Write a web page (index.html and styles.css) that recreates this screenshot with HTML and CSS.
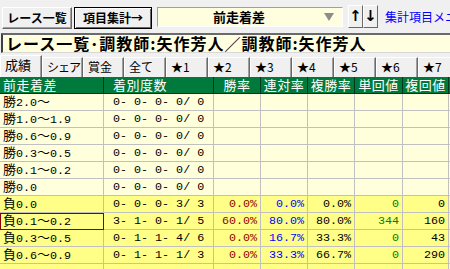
FILE: index.html
```html
<!DOCTYPE html>
<html lang="ja">
<head>
<meta charset="utf-8">
<link rel="stylesheet" href="styles.css">
</head>
<body>
<div class="app">
  <div class="toolbar">
    <div class="btn btn-list">レース一覧</div>
    <div class="btn btn-agg">項目集計→</div>
    <div class="combo"><span class="combo-text">前走着差</span><span class="tri"></span></div>
    <div class="arrow arrow-up">↑</div>
    <div class="arrow">↓</div>
    <div class="link">集計項目メニュー</div>
  </div>
  <div class="title">レース一覧･調教師:矢作芳人／調教師:矢作芳人</div>
  <div class="tabs">
    <div class="tab tab-sel w42">成績</div>
    <div class="tab w41 narrow">シェア</div>
    <div class="tab w41">賞金</div>
    <div class="tab w42">全て</div>
    <div class="tab w42">★1</div>
    <div class="tab w42">★2</div>
    <div class="tab w42">★3</div>
    <div class="tab w42">★4</div>
    <div class="tab w42">★5</div>
    <div class="tab w42">★6</div>
    <div class="tab w42">★7</div>
  </div>
  <div class="grid">
    <div class="hd">前走着差</div><div class="hd hd2">着別度数</div><div class="hd c">勝率</div><div class="hd c">連対率</div><div class="hd c">複勝率</div><div class="hd c">単回値</div><div class="hd c">複回値</div><div class="hd"></div>

    <div class="cl k"><span class="j">勝</span>2.0<span class="j">〜</span></div><div class="cl n">0- 0- 0- 0/ 0</div><div class="cl"></div><div class="cl"></div><div class="cl"></div><div class="cl"></div><div class="cl"></div><div class="cl"></div>
    <div class="cl k"><span class="j">勝</span>1.0<span class="j">〜</span>1.9</div><div class="cl n">0- 0- 0- 0/ 0</div><div class="cl"></div><div class="cl"></div><div class="cl"></div><div class="cl"></div><div class="cl"></div><div class="cl"></div>
    <div class="cl k"><span class="j">勝</span>0.6<span class="j">〜</span>0.9</div><div class="cl n">0- 0- 0- 0/ 0</div><div class="cl"></div><div class="cl"></div><div class="cl"></div><div class="cl"></div><div class="cl"></div><div class="cl"></div>
    <div class="cl k"><span class="j">勝</span>0.3<span class="j">〜</span>0.5</div><div class="cl n">0- 0- 0- 0/ 0</div><div class="cl"></div><div class="cl"></div><div class="cl"></div><div class="cl"></div><div class="cl"></div><div class="cl"></div>
    <div class="cl k"><span class="j">勝</span>0.1<span class="j">〜</span>0.2</div><div class="cl n">0- 0- 0- 0/ 0</div><div class="cl"></div><div class="cl"></div><div class="cl"></div><div class="cl"></div><div class="cl"></div><div class="cl"></div>
    <div class="cl k"><span class="j">勝</span>0.0</div><div class="cl n">0- 0- 0- 0/ 0</div><div class="cl"></div><div class="cl"></div><div class="cl"></div><div class="cl"></div><div class="cl"></div><div class="cl"></div>

    <div class="cl hi k"><span class="j">負</span>0.0</div><div class="cl hi n">0- 0- 0- 3/ 3</div><div class="cl hi r red">0.0%</div><div class="cl hi r blue">0.0%</div><div class="cl hi r">0.0%</div><div class="cl hi r green">0</div><div class="cl hi r">0</div><div class="cl hi"></div>
    <div class="cl hi k sel"><span class="j">負</span>0.1<span class="j">〜</span>0.2</div><div class="cl hi n">3- 1- 0- 1/ 5</div><div class="cl hi r red">60.0%</div><div class="cl hi r blue">80.0%</div><div class="cl hi r">80.0%</div><div class="cl hi r green">344</div><div class="cl hi r">160</div><div class="cl hi"></div>
    <div class="cl hi k"><span class="j">負</span>0.3<span class="j">〜</span>0.5</div><div class="cl hi n">0- 1- 1- 4/ 6</div><div class="cl hi r red">0.0%</div><div class="cl hi r blue">16.7%</div><div class="cl hi r">33.3%</div><div class="cl hi r green">0</div><div class="cl hi r">43</div><div class="cl hi"></div>
    <div class="cl hi k"><span class="j">負</span>0.6<span class="j">〜</span>0.9</div><div class="cl hi n">0- 1- 1- 1/ 3</div><div class="cl hi r red">0.0%</div><div class="cl hi r blue">33.3%</div><div class="cl hi r">66.7%</div><div class="cl hi r green">0</div><div class="cl hi r">290</div><div class="cl hi"></div>
    <div class="cl hi k"></div><div class="cl hi n"></div><div class="cl hi"></div><div class="cl hi"></div><div class="cl hi"></div><div class="cl hi"></div><div class="cl hi"></div><div class="cl hi"></div>
  </div>
</div>
</body>
</html>
```

FILE: styles.css
```css
html, body {
  margin: 0;
  padding: 0;
}
body {
  background: #f0f0f0;
  width: 450px;
  height: 269px;
  overflow: hidden;
  font-family: "Noto Sans CJK JP", sans-serif;
}
.app {
  width: 450px;
  height: 269px;
  overflow: hidden;
}
.toolbar {
  display: flex;
  align-items: flex-start;
  height: 33px;
  box-sizing: border-box;
  padding: 6px 0 0 2px;
  white-space: nowrap;
  overflow: hidden;
}
.toolbar > * { flex: none; }
.btn {
  box-sizing: border-box;
  height: 22px;
  margin-top: 1px;
  background: #f0f0f0;
  border: 1px solid;
  border-color: #ffffff #696969 #696969 #ffffff;
  box-shadow: inset -1px -1px 0 #a0a0a0;
  font-weight: 700;
  font-size: 12px;
  line-height: 19px;
  text-align: center;
  color: #000;
}
.btn-list { width: 70px; }
.btn-agg {
  width: 78px;
  margin-left: 2px;
  border: 1px solid #000;
  box-shadow: inset 1px 1px 0 #ffffff, inset -1px -1px 0 #696969;
}
.combo {
  box-sizing: border-box;
  width: 186px;
  height: 20px;
  margin: 1px 0 0 5px;
  background: #ffffe0;
  border: 1px solid;
  border-color: #a0a0a0 #ffffff #ffffff #a0a0a0;
  display: flex;
  align-items: center;
}
.combo-text {
  flex: 1;
  text-align: center;
  font-weight: 700;
  font-size: 13px;
  line-height: 18px;
  padding-right: 4px;
}
.tri {
  width: 0;
  height: 0;
  border-left: 5px solid transparent;
  border-right: 5px solid transparent;
  border-top: 8px solid #8c8c8c;
  margin-right: 8px;
}
.arrow {
  box-sizing: border-box;
  width: 15px;
  height: 23px;
  margin-top: -1px;
  background: #f0f0f0;
  border: 1px solid;
  border-color: #ffffff #696969 #696969 #ffffff;
  font-size: 15px;
  font-weight: 700;
  line-height: 20px;
  text-align: center;
  font-family: "DejaVu Sans", sans-serif;
}
.arrow-up { margin-left: 5px; }
.link {
  margin-left: 7px;
  color: #0000ff;
  font-size: 12px;
  line-height: 22px;
}
.title {
  box-sizing: border-box;
  height: 20px;
  margin-left: 1px;
  background: #ffffe0;
  border-top: 2px solid #6a6a6a;
  border-left: 2px solid #404040;
  border-bottom: 1px solid #d8d8d8;
  font-weight: 700;
  font-size: 16px;
  line-height: 17px;
  padding-left: 3px;
  letter-spacing: 1px;
  white-space: nowrap;
}
.tabs {
  display: flex;
  height: 24px;
  box-sizing: border-box;
  padding-top: 4px;
  white-space: nowrap;
}
.tab {
  box-sizing: border-box;
  flex: none;
  height: 20px;
  background: #f0f0f0;
  border-top: 1px solid #ffffff;
  border-left: 1px solid #ffffff;
  border-right: 1px solid #696969;
  box-shadow: inset -1px 0 0 #a0a0a0;
  font-size: 12px;
  line-height: 18px;
  padding-left: 4px;
  color: #000;
}
.tab.narrow { letter-spacing: -1px; }
.tab-sel {
  margin-top: -2px;
  height: 22px;
  font-size: 13px;
}
.w41 { width: 41px; }
.w42 { width: 42px; }
.grid {
  display: grid;
  grid-template-columns: 104px 110px 47px 47px 47px 48px 46px 60px;
  grid-auto-rows: 17px;
  width: 509px;
}
.hd {
  box-sizing: border-box;
  background: #00793d;
  color: #ffffff;
  border-right: 1px solid #00361b;
  border-bottom: 1px solid #00361b;
  font-size: 13px;
  letter-spacing: 0.5px;
  line-height: 16px;
  padding-left: 3px;
  white-space: nowrap;
}
.hd2 { padding-left: 9px; }
.hd.c { text-align: center; padding-left: 0; }
.cl {
  box-sizing: border-box;
  background: #ffffdc;
  border-right: 1px solid #c0c0c0;
  border-bottom: 1px solid #c0c0c0;
  font-family: "Liberation Mono", "Noto Sans CJK JP", monospace;
  font-size: 11.7px;
  line-height: 17px;
  white-space: pre;
  color: #000;
}
.cl.hi { background: #ffff88; }
.k { padding-left: 3px; }
.n { padding-left: 9px; }
.r { text-align: right; padding-right: 3px; }
.j {
  display: inline-block;
  font-family: "Noto Sans CJK JP", sans-serif;
  font-size: 13px;
  line-height: 13px;
  height: 13px;
}
.red { color: #900000; }
.blue { color: #0000ff; }
.green { color: #008000; }
.sel {
  outline: 1px solid #8b0000;
  outline-offset: -1px;
}
```
